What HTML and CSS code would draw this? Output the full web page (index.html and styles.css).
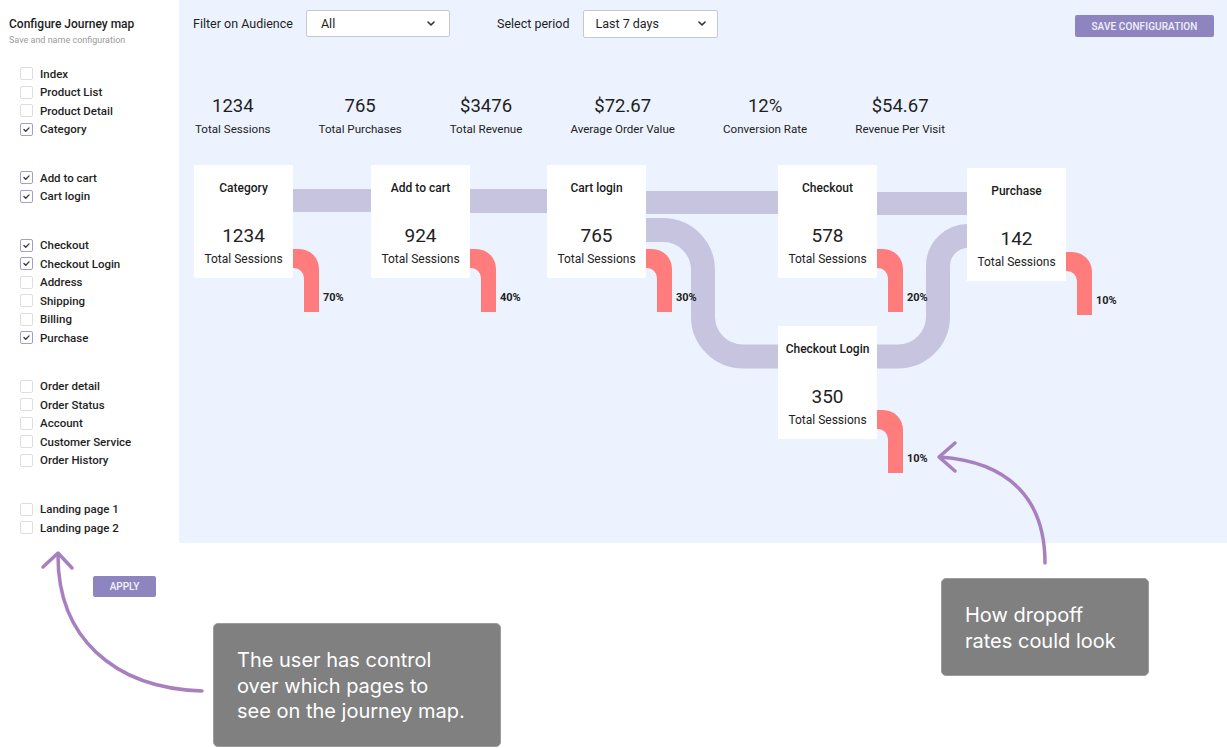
FILE: index.html
```html
<!DOCTYPE html>
<html lang="en">
<head>
<meta charset="utf-8">
<title>Configure Journey map</title>
<link rel="stylesheet" href="styles.css">
</head>
<body>
<div class="app">
  <aside class="sidebar">
    <div class="title">Configure Journey map</div>
    <div class="subtitle">Save and name configuration</div>
    <div class="groups">
      <ul class="group">
        <li><span class="cb"></span>Index</li>
        <li><span class="cb"></span>Product List</li>
        <li><span class="cb"></span>Product Detail</li>
        <li><span class="cb on"><svg viewBox="0 0 13 13"><polyline points="3.5,6.6 5.6,8.6 9.5,4.6"/></svg></span>Category</li>
      </ul>
      <ul class="group">
        <li><span class="cb on"><svg viewBox="0 0 13 13"><polyline points="3.5,6.6 5.6,8.6 9.5,4.6"/></svg></span>Add to cart</li>
        <li><span class="cb on"><svg viewBox="0 0 13 13"><polyline points="3.5,6.6 5.6,8.6 9.5,4.6"/></svg></span>Cart login</li>
      </ul>
      <ul class="group">
        <li><span class="cb on"><svg viewBox="0 0 13 13"><polyline points="3.5,6.6 5.6,8.6 9.5,4.6"/></svg></span>Checkout</li>
        <li><span class="cb on"><svg viewBox="0 0 13 13"><polyline points="3.5,6.6 5.6,8.6 9.5,4.6"/></svg></span>Checkout Login</li>
        <li><span class="cb"></span>Address</li>
        <li><span class="cb"></span>Shipping</li>
        <li><span class="cb"></span>Billing</li>
        <li><span class="cb on"><svg viewBox="0 0 13 13"><polyline points="3.5,6.6 5.6,8.6 9.5,4.6"/></svg></span>Purchase</li>
      </ul>
      <ul class="group">
        <li><span class="cb"></span>Order detail</li>
        <li><span class="cb"></span>Order Status</li>
        <li><span class="cb"></span>Account</li>
        <li><span class="cb"></span>Customer Service</li>
        <li><span class="cb"></span>Order History</li>
      </ul>
      <ul class="group">
        <li><span class="cb"></span>Landing page 1</li>
        <li><span class="cb"></span>Landing page 2</li>
      </ul>
    </div>
    <button class="apply">APPLY</button>
  </aside>

  <main class="main">
    <div class="topbar">
      <span class="flabel">Filter on Audience</span>
      <div class="select sel-aud"><span>All</span><svg class="chev" viewBox="0 0 8 5"><polyline points="1,1 4,4 7,1"/></svg></div>
      <span class="flabel period">Select period</span>
      <div class="select sel-per"><span>Last 7 days</span><svg class="chev" viewBox="0 0 8 5"><polyline points="1,1 4,4 7,1"/></svg></div>
      <button class="save">SAVE CONFIGURATION</button>
    </div>

    <div class="stats">
      <div class="stat"><div class="num">1234</div><div class="lbl">Total Sessions</div></div>
      <div class="stat"><div class="num">765</div><div class="lbl">Total Purchases</div></div>
      <div class="stat"><div class="num">$3476</div><div class="lbl">Total Revenue</div></div>
      <div class="stat"><div class="num">$72.67</div><div class="lbl">Average Order Value</div></div>
      <div class="stat"><div class="num">12%</div><div class="lbl">Conversion Rate</div></div>
      <div class="stat"><div class="num">$54.67</div><div class="lbl">Revenue Per Visit</div></div>
    </div>

    <div class="map">
      <svg class="links" viewBox="0 0 1048 393">
        <rect x="114" y="39" width="78" height="23"/>
        <rect x="291" y="39" width="77" height="24"/>
        <rect x="467" y="41" width="132" height="23"/>
        <rect x="698" y="42" width="90" height="23"/>
        <path d="M467 80 H484 A40 40 0 0 1 524 120 V166 A40 40 0 0 0 564 206.5 H600"/>
        <path d="M698 206.5 H719 A40 40 0 0 0 759 166.5 V116 A30 30 0 0 1 789 86"/>
      </svg>

      <div class="node n-category">
        <div class="card"><div class="ctitle">Category</div><div class="cnum">1234</div><div class="clbl">Total Sessions</div></div>
        <svg class="drop" viewBox="0 0 26 63"><path d="M0 0 H6 A20 20 0 0 1 26 20 V63 H11 V29 A10 10 0 0 0 1 19 H0 Z"/></svg>
        <span class="pct">70%</span>
      </div>
      <div class="node n-cart">
        <div class="card"><div class="ctitle">Add to cart</div><div class="cnum">924</div><div class="clbl">Total Sessions</div></div>
        <svg class="drop" viewBox="0 0 26 63"><path d="M0 0 H6 A20 20 0 0 1 26 20 V63 H11 V29 A10 10 0 0 0 1 19 H0 Z"/></svg>
        <span class="pct">40%</span>
      </div>
      <div class="node n-cartlogin">
        <div class="card"><div class="ctitle">Cart login</div><div class="cnum">765</div><div class="clbl">Total Sessions</div></div>
        <svg class="drop" viewBox="0 0 26 63"><path d="M0 0 H6 A20 20 0 0 1 26 20 V63 H11 V29 A10 10 0 0 0 1 19 H0 Z"/></svg>
        <span class="pct">30%</span>
      </div>
      <div class="node n-checkout">
        <div class="card"><div class="ctitle">Checkout</div><div class="cnum">578</div><div class="clbl">Total Sessions</div></div>
        <svg class="drop" viewBox="0 0 26 63"><path d="M0 0 H6 A20 20 0 0 1 26 20 V63 H11 V29 A10 10 0 0 0 1 19 H0 Z"/></svg>
        <span class="pct">20%</span>
      </div>
      <div class="node n-purchase">
        <div class="card"><div class="ctitle">Purchase</div><div class="cnum">142</div><div class="clbl">Total Sessions</div></div>
        <svg class="drop" viewBox="0 0 26 63"><path d="M0 0 H6 A20 20 0 0 1 26 20 V63 H11 V29 A10 10 0 0 0 1 19 H0 Z"/></svg>
        <span class="pct">10%</span>
      </div>
      <div class="node n-checkoutlogin">
        <div class="card"><div class="ctitle">Checkout Login</div><div class="cnum">350</div><div class="clbl">Total Sessions</div></div>
        <svg class="drop" viewBox="0 0 26 63"><path d="M0 0 H6 A20 20 0 0 1 26 20 V63 H11 V29 A10 10 0 0 0 1 19 H0 Z"/></svg>
        <span class="pct">10%</span>
      </div>
    </div>
  </main>
</div>

<svg class="arrows" viewBox="0 0 1227 748">
  <path d="M202 691 C112 688 58 636 58 556"/>
  <path d="M43 567 L58 553 L72 568"/>
  <path d="M1045 563 C1045 500 1010 462 940 457"/>
  <path d="M955 443 L939 457 L955 471"/>
</svg>

<div class="note note-left">The user has control<br>over which pages to<br>see on the journey map.</div>
<div class="note note-right">How dropoff<br>rates could look</div>
</body>
</html>
```

FILE: styles.css
```css
* { box-sizing: border-box; }

body {
  margin: 0;
  width: 1227px;
  height: 748px;
  position: relative;
  overflow: hidden;
  background: #ffffff;
  font-family: Roboto, "Liberation Sans", sans-serif;
  color: #222222;
}

.app {
  display: flex;
  align-items: flex-start;
}

/* Sidebar */
.sidebar {
  width: 179px;
  flex: none;
  padding-top: 17px;
}

.title {
  margin-left: 9px;
  font-size: 12px;
  line-height: 15px;
  font-weight: 500;
  color: #1d1d1d;
}

.subtitle {
  margin: 2px 0 0 9px;
  font-size: 9px;
  line-height: 12px;
  color: #9b9b9b;
}

.groups {
  margin-top: 18.5px;
  padding-left: 20px;
}

.group {
  list-style: none;
  margin: 0;
  padding: 0;
}

.group + .group {
  margin-top: 30.5px;
}

.group li {
  display: flex;
  align-items: center;
  gap: 7px;
  height: 18.45px;
  font-size: 11.5px;
  font-weight: 500;
  color: #1f1f1f;
}

.cb {
  width: 13px;
  height: 13px;
  flex: none;
  border: 1px solid #dedede;
  border-radius: 2px;
  background: #fff;
  display: flex;
}

.cb.on {
  border-color: #a29dd3;
}

.cb svg {
  width: 11px;
  height: 11px;
  fill: none;
  stroke: #3a3a3a;
  stroke-width: 1.6;
  stroke-linecap: round;
  stroke-linejoin: round;
}

.apply {
  display: block;
  margin: 39px 0 0 93px;
  width: 63px;
  height: 21px;
  border: none;
  border-radius: 2px;
  background: #8e85c0;
  color: #f4f2fb;
  font-family: Roboto, sans-serif;
  font-size: 10px;
  font-weight: 500;
  padding: 0;
}

/* Main panel */
.main {
  width: 1048px;
  height: 543px;
  flex: none;
  background: #edf3fe;
}

.topbar {
  display: flex;
  align-items: center;
  height: 37px;
  padding: 10px 13px 0 14px;
}

.flabel {
  font-size: 12.5px;
  color: #1e1e1e;
  margin-right: 13px;
}

.flabel.period {
  margin-left: 47px;
}

.select {
  height: 27px;
  background: #fff;
  border: 1px solid #c8c8c8;
  border-radius: 2px;
  display: flex;
  align-items: center;
  justify-content: space-between;
  font-size: 12.5px;
  color: #1e1e1e;
}

.sel-aud {
  width: 144px;
  padding: 0 14px 0 14px;
}

.sel-per {
  width: 135px;
  padding: 0 11px 0 12px;
  height: 28px;
}

.chev {
  width: 8px;
  height: 5px;
  fill: none;
  stroke: #333;
  stroke-width: 1.6;
  stroke-linecap: round;
  stroke-linejoin: round;
}

.save {
  margin-left: auto;
  align-self: flex-start;
  margin-top: 5px;
  width: 139px;
  height: 22px;
  border: none;
  border-radius: 2px;
  background: #8e85c0;
  color: #f2f0fa;
  font-family: Roboto, sans-serif;
  font-size: 10px;
  font-weight: 500;
  letter-spacing: 0.1px;
  padding: 0;
}

/* Stats */
.stats {
  display: flex;
  gap: 48px;
  padding-left: 16px;
  margin-top: 58px;
}

.stat {
  text-align: center;
}

.num {
  font-size: 18.5px;
  line-height: 22px;
  font-weight: 400;
  color: #1f1f1f;
}

.lbl {
  margin-top: 4px;
  font-size: 11.6px;
  line-height: 16px;
  color: #222;
}

/* Journey map */
.map {
  position: relative;
  height: 393px;
  margin-top: 13px;
}

.links {
  position: absolute;
  left: 0;
  top: 0;
  width: 1048px;
  height: 393px;
}

.links rect {
  fill: #c6c4df;
}

.links path {
  fill: none;
  stroke: #c6c4df;
  stroke-width: 24;
}

.node {
  position: absolute;
  width: 99px;
  height: 113px;
}

.n-category { left: 15px; top: 15px; }
.n-cart { left: 192px; top: 15px; }
.n-cartlogin { left: 368px; top: 15px; }
.n-checkout { left: 599px; top: 15px; }
.n-purchase { left: 788px; top: 18px; }
.n-checkoutlogin { left: 599px; top: 176px; }

.card {
  width: 99px;
  height: 113px;
  background: #ffffff;
  display: flex;
  flex-direction: column;
  align-items: center;
  padding-top: 15px;
}

.ctitle {
  font-size: 12px;
  line-height: 16px;
  font-weight: 500;
  color: #1a1a1a;
}

.cnum {
  margin-top: 29px;
  font-size: 19px;
  line-height: 22px;
  color: #222;
}

.clbl {
  margin-top: 4px;
  font-size: 12px;
  line-height: 16px;
  color: #222;
}

.drop {
  position: absolute;
  left: 99px;
  top: 84px;
  width: 26px;
  height: 63px;
  fill: #fe7c7c;
}

.pct {
  position: absolute;
  left: 129px;
  top: 126px;
  font-size: 11px;
  line-height: 14px;
  font-weight: 700;
  color: #222;
}

/* Annotations */
.arrows {
  position: absolute;
  left: 0;
  top: 0;
  width: 1227px;
  height: 748px;
  pointer-events: none;
}

.arrows path {
  fill: none;
  stroke: #a87fbf;
  stroke-width: 3.5;
  stroke-linecap: round;
  stroke-linejoin: round;
}

.note {
  position: absolute;
  background: #808080;
  border: 1px solid #9c9c9c;
  border-radius: 5px;
  color: #ffffff;
  font-family: Inter, "Noto Sans", sans-serif;
  font-size: 20px;
  line-height: 25.5px;
  padding: 24px 0 0 23px;
  white-space: nowrap;
}

.note-left {
  left: 213px;
  top: 623px;
  width: 288px;
  height: 124px;
}

.note-right {
  left: 941px;
  top: 578px;
  width: 208px;
  height: 98px;
}
```
